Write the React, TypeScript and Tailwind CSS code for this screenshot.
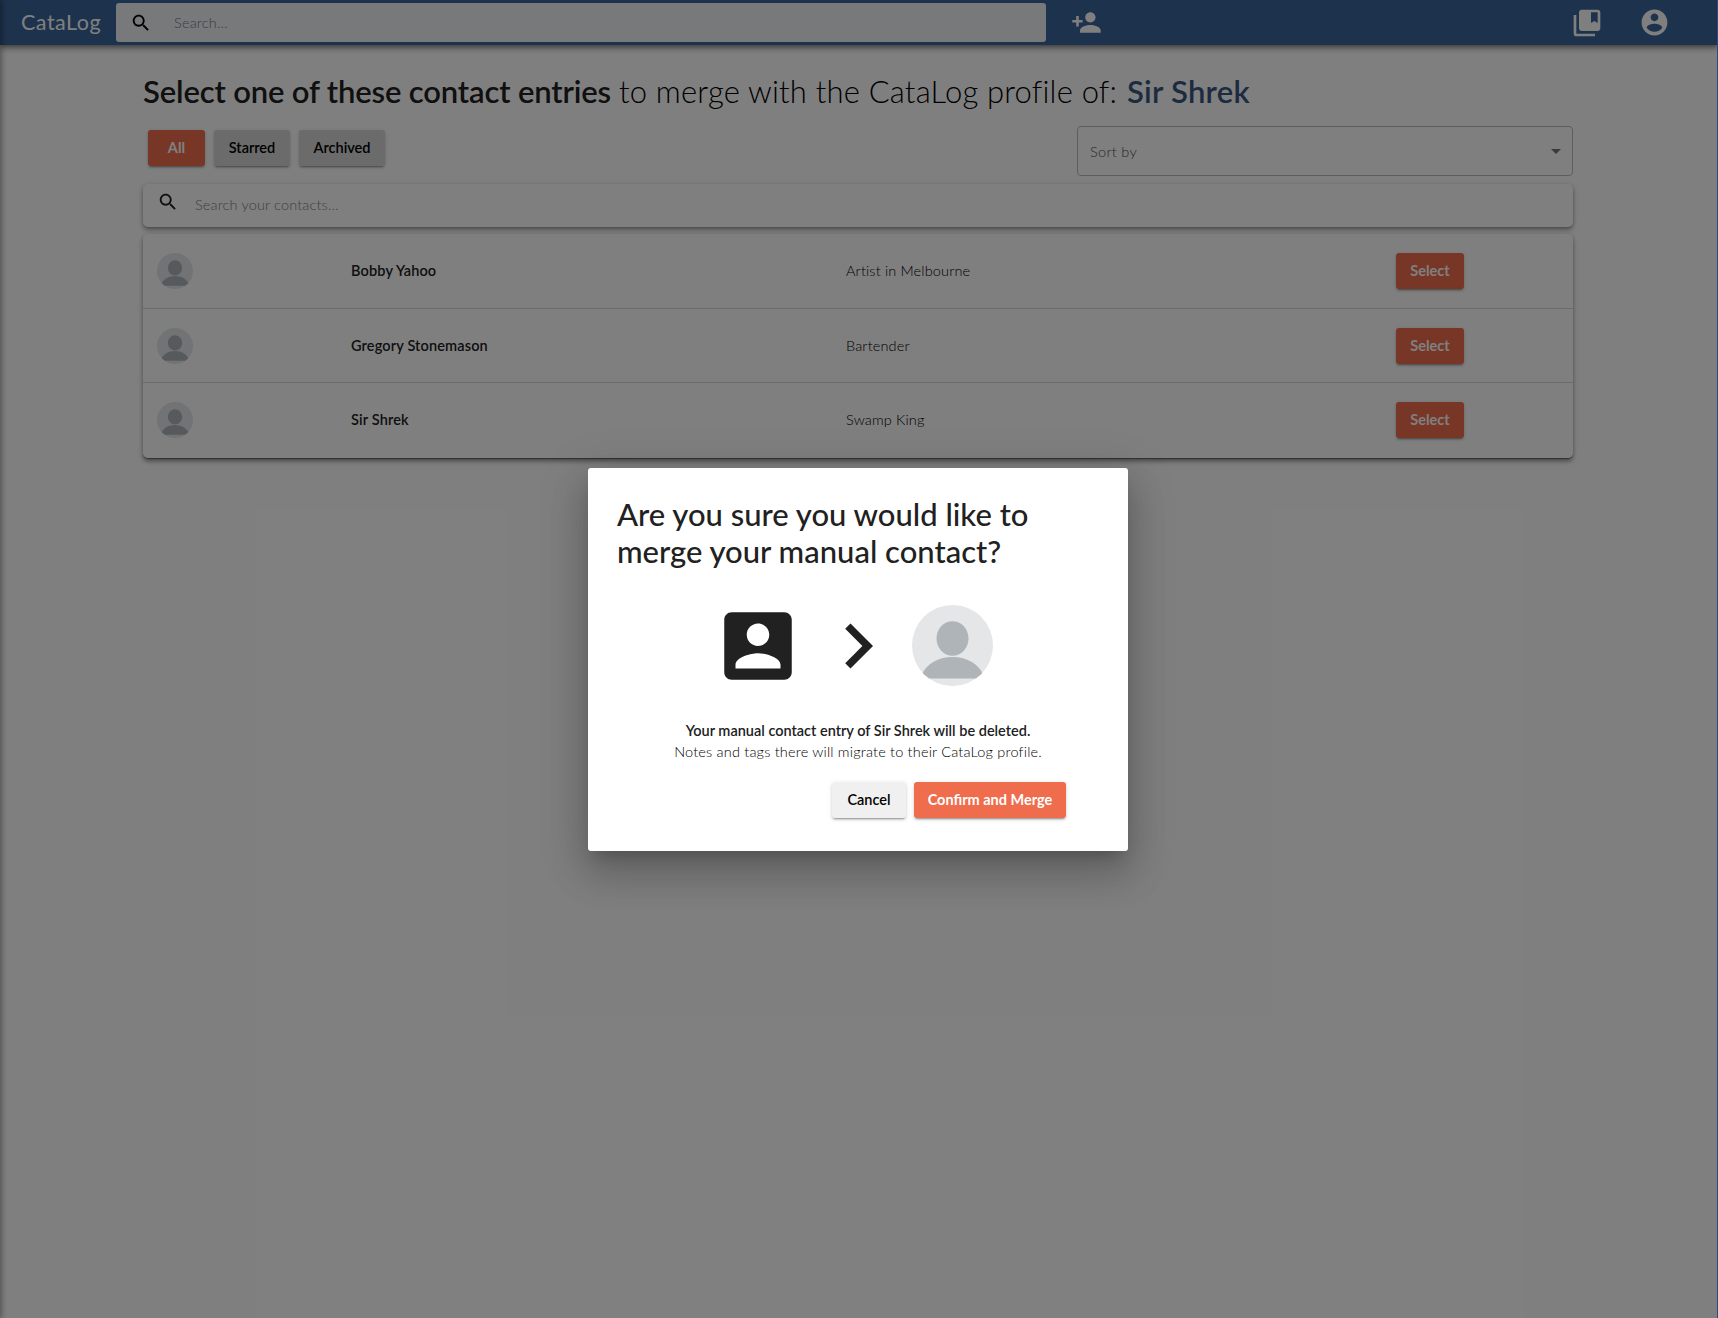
import React from "react";

const mat = "shadow-[0_3px_1px_-2px_rgba(0,0,0,0.2),0_2px_2px_0_rgba(0,0,0,0.14),0_1px_5px_0_rgba(0,0,0,0.12)]";
const cardShadow = "shadow-[0_2px_4px_-1px_rgba(0,0,0,0.35),0_3px_5px_0_rgba(0,0,0,0.16),0_1px_8px_0_rgba(0,0,0,0.1)]";

function Icon({ d, className }: { d: string; className: string }) {
  return (
    <svg viewBox="0 0 24 24" fill="currentColor" className={`shrink-0 ${className}`}>
      <path d={d} />
    </svg>
  );
}

const SEARCH =
  "M15.5 14h-.79l-.28-.27C15.41 12.59 16 11.11 16 9.5 16 5.91 13.09 3 9.5 3S3 5.91 3 9.5 5.91 16 9.5 16c1.61 0 3.09-.59 4.23-1.57l.27.28v.79l5 4.99L20.49 19l-4.99-5zm-6 0C7.01 14 5 11.99 5 9.5S7.01 5 9.5 5 14 7.01 14 9.5 11.99 14 9.5 14z";
const PERSON_ADD =
  "M15 12c2.21 0 4-1.79 4-4s-1.79-4-4-4-4 1.79-4 4 1.79 4 4 4zm-9-2V7H4v3H1v2h3v3h2v-3h3v-2H6zm9 4c-2.67 0-8 1.34-8 4v2h16v-2c0-2.66-5.33-4-8-4z";
const COLLECTIONS =
  "M4 6H2v14c0 1.1.9 2 2 2h14v-2H4V6zm16-4H8c-1.1 0-2 .9-2 2v12c0 1.1.9 2 2 2h12c1.1 0 2-.9 2-2V4c0-1.1-.9-2-2-2zm0 10l-2.5-1.5L15 12V4h5v8z";
const ACCOUNT =
  "M12 2C6.48 2 2 6.48 2 12s4.48 10 10 10 10-4.48 10-10S17.52 2 12 2zm0 3c1.66 0 3 1.34 3 3s-1.34 3-3 3-3-1.34-3-3 1.34-3 3-3zm0 14.2c-2.5 0-4.71-1.28-6-3.22.03-1.99 4-3.08 6-3.08 1.99 0 5.97 1.09 6 3.08-1.29 1.94-3.5 3.22-6 3.22z";
const ACCOUNT_BOX =
  "M3 5v14c0 1.1.89 2 2 2h14c1.1 0 2-.9 2-2V5c0-1.1-.9-2-2-2H5c-1.11 0-2 .9-2 2zm12 4c0 1.66-1.34 3-3 3s-3-1.34-3-3 1.34-3 3-3 3 1.34 3 3zm-9 8c0-2 4-3.1 6-3.1s6 1.1 6 3.1v1H6v-1z";
const CHEVRON = "M10 6L8.59 7.41 13.17 12l-4.58 4.59L10 18l6-6z";

function Avatar({ className }: { className: string }) {
  return (
    <svg viewBox="0 0 81 81" className={`shrink-0 rounded-full ${className}`}>
      <rect width="81" height="81" fill="#e4e6e8" />
      <ellipse cx="40.5" cy="33.5" rx="16" ry="17.2" fill="#aeb4b8" />
      <path d="M8 73.5C13 59 26 52 40.5 52S68 59 73 73.5Z" fill="#aeb4b8" />
    </svg>
  );
}

function Button({ children, className }: { children: React.ReactNode; className: string }) {
  return (
    <button className={`flex h-9 shrink-0 items-center justify-center rounded-[3px] text-[14.5px] whitespace-nowrap ${mat} ${className}`}>
      {children}
    </button>
  );
}

const contacts = [
  { name: "Bobby Yahoo", job: "Artist in Melbourne", row: "h-[75px] border-b" },
  { name: "Gregory Stonemason", job: "Bartender", row: "h-[74px] border-b" },
  { name: "Sir Shrek", job: "Swamp King", row: "h-[74px]" },
];

export default function App() {
  return (
    <div className="relative h-[1318px] w-[1718px] overflow-hidden bg-white font-['Lato',sans-serif] text-[#212121]">
      <header className="relative flex h-[45px] items-center bg-[#3b6499] text-white shadow-[0_2px_4px_-1px_rgba(0,0,0,0.3),0_4px_5px_0_rgba(0,0,0,0.2),0_1px_10px_0_rgba(0,0,0,0.2)]">
        <div className="w-[95px] shrink-0 pl-[21px] text-[21.5px] tracking-[0.5px]">CataLog</div>
        <div className="ml-[21px] flex h-[39px] w-[930px] items-center rounded-[3px] bg-[#eef2f6] pl-[14px]">
          <Icon d={SEARCH} className="size-[22px] text-black" />
          <span className="pl-[22px] text-[14.5px] font-light tracking-[0.2px] text-[#77797b]">Search...</span>
        </div>
        <Icon d={PERSON_ADD} className="ml-[25px] size-[31px]" />
        <Icon d={COLLECTIONS} className="ml-[469px] size-[32px]" />
        <Icon d={ACCOUNT} className="ml-[36px] size-[31px]" />
      </header>

      <main className="ml-[143px] w-[1430px]">
        <h1 className="flex h-[81px] items-center pt-[13px] pb-px text-[31px] whitespace-nowrap">
          <span className="w-[476px] font-semibold tracking-[-0.15px]">Select one of these contact entries</span>
          <span className="w-[508px] font-light tracking-[0.19px] text-black">to merge with the CataLog profile of:</span>
          <span className="font-semibold tracking-[0.25px] text-[#3b5780]">Sir Shrek</span>
        </h1>

        <div className="flex h-[50px] items-start">
          <div className="flex gap-[9px] pt-1 pl-[5px]">
            <Button className="w-[57px] bg-[#ef6c4d] font-bold text-white">All</Button>
            <Button className="w-[76px] bg-[#d6d6d6] font-semibold text-black">Starred</Button>
            <Button className="w-[86px] bg-[#d6d6d6] font-semibold text-black">Archived</Button>
          </div>
          <div className="ml-auto flex h-[50px] w-[496px] items-center justify-between rounded border border-[#bdbdbd] pr-[11px] pl-3">
            <span className="pt-px text-[14.5px] font-light tracking-[0.3px] text-[#505050]">Sort by</span>
            <svg viewBox="0 0 10 5" className="h-[5px] w-[10px] fill-[#757575]">
              <path d="M0 0h10L5 5z" />
            </svg>
          </div>
        </div>

        <div className={`mt-2 flex h-[43px] rounded-[5px] bg-white ${cardShadow}`}>
          <Icon d={SEARCH} className="mt-[7px] ml-[14px] size-[22px]" />
          <span className="pt-[10px] pl-4 text-[14.5px] font-light tracking-[0.15px] text-[#808080]">Search your contacts...</span>
        </div>

        <div className={`mt-[7px] rounded-[5px] border-b border-[#666] bg-white pb-px ${cardShadow}`}>
          {contacts.map((c) => (
            <div key={c.name} className={`flex items-center border-[#d9d9d9] ${c.row}`}>
              <Avatar className="ml-[14px] size-9" />
              <span className="w-[495px] pl-[158px] text-[14.5px] font-semibold tracking-[0.15px] whitespace-nowrap">{c.name}</span>
              <span className="ml-[158px] w-[550px] text-[14.5px] font-light tracking-[0.15px] text-black">{c.job}</span>
              <Button className="w-[68px] bg-[#ef6c4d] font-bold text-white">Select</Button>
            </div>
          ))}
        </div>
      </main>

      <div className="absolute inset-y-0 -left-1 w-1 shadow-[0_0_6px_1px_rgba(0,0,0,0.45)]" />

      <div className="absolute inset-0 bg-black/50">
        <div className="mt-[468px] ml-[588px] flex h-[383px] w-[540px] flex-col rounded-[3px] bg-white shadow-[0_11px_15px_-7px_rgba(0,0,0,0.2),0_24px_38px_3px_rgba(0,0,0,0.14),0_9px_46px_8px_rgba(0,0,0,0.12)]">
          <h2 className="h-[137px] pt-7 pl-[29px] text-[31px] leading-[37px] font-medium">
            <div>Are you sure you would like to</div>
            <div>merge your manual contact?</div>
          </h2>
          <div className="flex h-[81px] items-center">
            <Icon d={ACCOUNT_BOX} className="ml-[125px] size-[90px]" />
            <Icon d={CHEVRON} className="ml-[10px] size-[90px]" />
            <Avatar className="ml-[9px] size-[81px]" />
          </div>
          <div className="pt-[34px] text-center text-[14.5px] leading-[21px]">
            <div className="font-semibold">Your manual contact entry of Sir Shrek will be deleted.</div>
            <div className="font-light tracking-[0.19px] text-black">Notes and tags there will migrate to their CataLog profile.</div>
          </div>
          <div className="flex gap-2 pt-5 pl-[244px]">
            <Button className="w-[74px] bg-[#f0f0f0] font-semibold text-black">Cancel</Button>
            <Button className="w-[152px] bg-[#ef6c4d] font-bold text-white">Confirm and Merge</Button>
          </div>
        </div>
      </div>

      <div className="absolute inset-y-0 right-0 w-px bg-[#2c4a7c]" />
    </div>
  );
}
